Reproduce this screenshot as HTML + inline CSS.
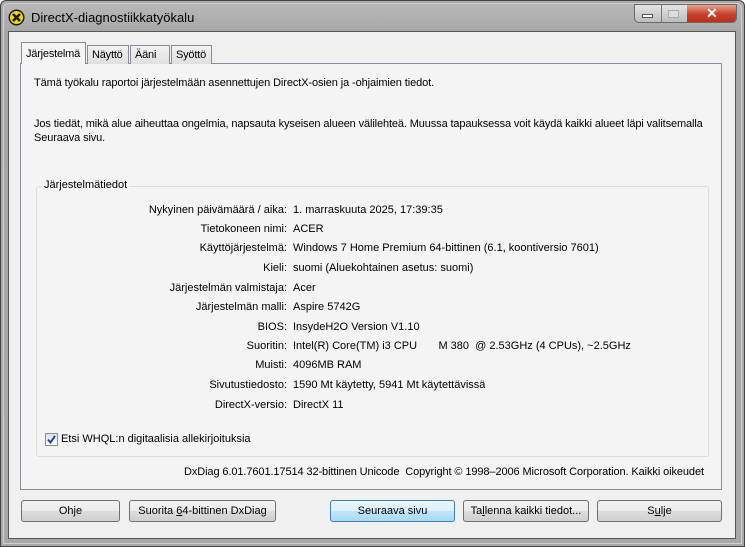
<!DOCTYPE html>
<html><head><meta charset="utf-8"><style>
*{margin:0;padding:0;box-sizing:border-box}
body{width:745px;height:547px;overflow:hidden;background:#fff;font-family:"Liberation Sans",sans-serif;font-size:11px;color:#000;position:relative}
.a{position:absolute;white-space:nowrap}
#win{position:absolute;left:0;top:0;width:745px;height:547px;background:#a9a9a9;border:1px solid #444;border-radius:6px 6px 0 0}
#frameIn{position:absolute;left:2px;top:2px;right:2px;bottom:2px;border:1px solid #d0d0d0;border-radius:5px 5px 0 0;background:linear-gradient(#b8b8b8,#a6a6a6 30px,#a8a8a8)}
#client{position:absolute;left:8px;top:31px;width:728px;height:508px;background:#f0f0f0;border:1px solid #555}
.tab{position:absolute;top:45px;height:19px;border:1px solid #898c95;border-bottom:none;background:linear-gradient(#f2f2f2,#e0e0e0);font-size:11px;padding:3px 0 0 4px;letter-spacing:-0.2px}
#panel{position:absolute;left:20px;top:63px;width:702px;height:427px;border:1px solid #898c95;background:#f4f4f4}
#grp{position:absolute;left:36px;top:186px;width:673px;height:271px;border:1px solid #dcdcdc;border-radius:3px}
.lbl{position:absolute;right:458px;white-space:nowrap;text-align:right}
.val{position:absolute;left:293px;white-space:nowrap}
.btn{position:absolute;top:500px;height:22px;border:1px solid #707070;border-radius:3px;background:linear-gradient(#f2f2f2 0,#ebebeb 50%,#dddddd 51%,#cfcfcf);text-align:center;line-height:20px;font-size:11px}
</style></head><body>
<div id="win"><div id="frameIn"></div></div>
<svg class="a" style="left:8px;top:9px" width="17" height="17" viewBox="0 0 17 17"><circle cx="8.5" cy="8.5" r="8" fill="#1a1a1a"/><circle cx="8.5" cy="8.5" r="6.5" fill="#f0d800"/><path d="M5 5 L12 12 M12 5 L5 12" stroke="#1a1a1a" stroke-width="2.6"/></svg>
<div class="a" style="left:31px;top:10px;font-size:13px">DirectX-diagnostiikkatyökalu</div>
<div class="a" style="left:634px;top:4px;width:103px;height:19px;border:1px solid #6a6a6a;border-radius:0 0 5px 5px;overflow:hidden;background:linear-gradient(#e4e4e4,#bdbdbd)">
 <div class="a" style="left:26px;top:0;width:1px;height:19px;background:#777"></div>
 <div class="a" style="left:52px;top:0;width:51px;height:19px;background:linear-gradient(#e8a090,#c8402a 50%,#b82a14)"></div>
 <div class="a" style="left:7px;top:9px;width:11px;height:4px;background:#fff;border:1px solid #555"></div>
 <div class="a" style="left:33px;top:5px;width:11px;height:8px;border:1px solid #aaa;background:#ddd"></div>
 <div class="a" style="left:71px;top:0px;color:#fff;font-weight:bold;font-size:14px">✕</div>
</div>
<div id="client"></div>
<div id="panel"></div>
<div class="tab" style="left:21px;top:42px;height:22px;width:65px;background:#f4f4f4;border-color:#898c95;z-index:2;padding-top:5px">Järjestelmä</div>
<div class="tab" style="left:87px;width:42px">Näyttö</div>
<div class="tab" style="left:130px;width:40px">Ääni</div>
<div class="tab" style="left:171px;width:41px">Syöttö</div>
<div class="a" style="left:34px;top:77px;letter-spacing:-0.1px">Tämä työkalu raportoi järjestelmään asennettujen DirectX-osien ja -ohjaimien tiedot.</div>
<div class="a" style="left:34px;top:117px;line-height:14px;letter-spacing:-0.12px">Jos tiedät, mikä alue aiheuttaa ongelmia, napsauta kyseisen alueen välilehteä. Muussa tapauksessa voit käydä kaikki alueet läpi valitsemalla<br>Seuraava sivu.</div>
<div id="grp"></div>
<div class="a" style="left:42px;top:179px;background:#f4f4f4;padding:0 2px">Järjestelmätiedot</div>
<div class="lbl" style="top:204px">Nykyinen päivämäärä / aika:</div><div class="val" style="top:204px">1. marraskuuta 2025, 17:39:35</div>
<div class="lbl" style="top:223px">Tietokoneen nimi:</div><div class="val" style="top:223px">ACER</div>
<div class="lbl" style="top:242px">Käyttöjärjestelmä:</div><div class="val" style="top:242px">Windows 7 Home Premium 64-bittinen (6.1, koontiversio 7601)</div>
<div class="lbl" style="top:262px">Kieli:</div><div class="val" style="top:262px">suomi (Aluekohtainen asetus: suomi)</div>
<div class="lbl" style="top:282px">Järjestelmän valmistaja:</div><div class="val" style="top:282px">Acer</div>
<div class="lbl" style="top:301px">Järjestelmän malli:</div><div class="val" style="top:301px">Aspire 5742G</div>
<div class="lbl" style="top:321px">BIOS:</div><div class="val" style="top:321px">InsydeH2O Version V1.10</div>
<div class="lbl" style="top:340px">Suoritin:</div><div class="val" style="top:340px">Intel(R) Core(TM) i3 CPU &nbsp; &nbsp; &nbsp; M 380 &nbsp;@ 2.53GHz (4 CPUs), ~2.5GHz</div>
<div class="lbl" style="top:359px">Muisti:</div><div class="val" style="top:359px">4096MB RAM</div>
<div class="lbl" style="top:379px">Sivutustiedosto:</div><div class="val" style="top:379px">1590 Mt käytetty, 5941 Mt käytettävissä</div>
<div class="lbl" style="top:399px">DirectX-versio:</div><div class="val" style="top:399px">DirectX 11</div>
<div class="a" style="left:45px;top:433px;width:13px;height:13px;border:1px solid #8f8f8f;background:linear-gradient(#dde,#fff)"><svg width="11" height="11" viewBox="0 0 11 11" style="position:absolute;left:0;top:0"><path d="M2 5.5 L4.5 8.5 L9 2" stroke="#2a4a8a" stroke-width="2" fill="none"/></svg></div>
<div class="a" style="left:61px;top:433px">Etsi WHQL:n digitaalisia allekirjoituksia</div>
<div class="a" style="left:184px;top:466px;letter-spacing:-0.1px">DxDiag 6.01.7601.17514 32-bittinen Unicode &nbsp;Copyright © 1998–2006 Microsoft Corporation. Kaikki oikeudet</div>
<div class="btn" style="left:21px;width:99px">Oh<u>j</u>e</div>
<div class="btn" style="left:129px;width:147px">Suorita <u>6</u>4-bittinen DxDiag</div>
<div class="btn" style="left:330px;width:125px;border-color:#3c7fb1;background:linear-gradient(#eaf6fd,#d9f0fc 50%,#bee6fd 51%,#a7d9f5)">Seuraava sivu</div>
<div class="btn" style="left:463px;width:126px">Ta<u>l</u>lenna kaikki tiedot...</div>
<div class="btn" style="left:597px;width:125px">S<u>u</u>lje</div>
</body></html>
